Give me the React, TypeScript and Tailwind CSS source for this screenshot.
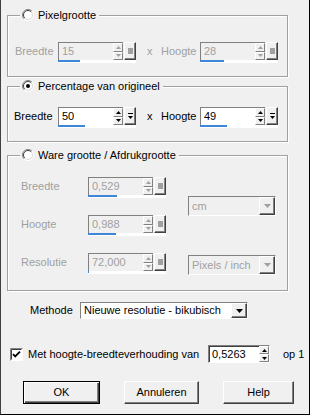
import React from 'react';

const raised =
  'border border-t-white border-l-white border-r-[#404040] border-b-[#404040] shadow-[inset_-1px_-1px_0_#808080] bg-[#f0f0f0]';

function Tri({ up, color }: { up?: boolean; color: string }) {
  return (
    <svg width="5" height="3" viewBox="0 0 5 3">
      <path d={up ? 'M2.5 0L5 3H0Z' : 'M0 0H5L2.5 3Z'} fill={color} />
    </svg>
  );
}

function Spin({ color }: { color: string }) {
  return (
    <div className="flex w-[10px] flex-col">
      <div className="flex flex-1 items-center justify-center border border-t-white border-l-white border-r-[#808080] border-b-[#808080] bg-[#f0f0f0]">
        <Tri up color={color} />
      </div>
      <div className="flex flex-1 items-center justify-center border border-t-white border-l-white border-r-[#808080] border-b-[#808080] bg-[#f0f0f0]">
        <Tri color={color} />
      </div>
    </div>
  );
}

function Radio({ checked }: { checked?: boolean }) {
  return (
    <svg width="12" height="12" viewBox="0 0 12 12">
      <circle cx="6" cy="6" r="5.5" fill="#fff" />
      <path d="M2.1 9.9A5.5 5.5 0 0 1 9.9 2.1" stroke="#808080" fill="none" />
      <path d="M2.8 9.2A4.5 4.5 0 0 1 9.2 2.8" stroke="#404040" fill="none" />
      <path d="M9.9 2.1A5.5 5.5 0 0 1 2.1 9.9" stroke="#fff" fill="none" />
      <path d="M9.2 2.8A4.5 4.5 0 0 1 2.8 9.2" stroke="#d8d8d8" fill="none" />
      {checked && <circle cx="6" cy="6" r="2" fill="#000" />}
    </svg>
  );
}

function Check() {
  return (
    <svg width="13" height="13" viewBox="0 0 13 13">
      <rect x="0" y="0" width="13" height="13" fill="#fff" />
      <path d="M0.5 12.5V0.5H12.5" stroke="#808080" fill="none" />
      <path d="M1.5 11.5V1.5H11.5" stroke="#404040" fill="none" />
      <path d="M1 12.5H12.5V1" stroke="#fff" fill="none" />
      <path d="M3 6.2L5.2 8.4L10 3.6" stroke="#000" strokeWidth="1.8" fill="none" />
    </svg>
  );
}

function SpinEdit({
  value,
  disabled,
  fill,
  side,
}: {
  value: string;
  disabled?: boolean;
  fill: number;
  side: 'square' | 'drop';
}) {
  const color = disabled ? '#a0a0a0' : '#000';
  return (
    <div className="flex w-[78px] flex-col">
      <div className="flex h-[18px]">
        <div
          className={`flex w-[65px] border-t border-l border-[#808080] ${
            disabled ? 'bg-[#f0f0f0]' : 'bg-white'
          }`}
        >
          <span
            className={`flex-1 pl-[3px] leading-[16px] ${
              disabled ? 'text-[#a0a0a0]' : 'text-black'
            }`}
          >
            {value}
          </span>
          <Spin color={color} />
        </div>
        <div className={`ml-[1px] flex w-[12px] items-center justify-center ${raised}`}>
          {side === 'square' ? (
            <span className="h-[6px] w-[5px] bg-[#a0a0a0]" />
          ) : (
            <svg width="5" height="7" viewBox="0 0 5 7">
              <rect x="0" y="0" width="5" height="1" fill="#000" />
              <path d="M0 3H5L2.5 6Z" fill="#000" />
            </svg>
          )}
        </div>
      </div>
      <div className="h-[3px] bg-white">
        <div className="h-[2px] bg-[#3d86d8]" style={{ width: fill }} />
      </div>
    </div>
  );
}

function Combo({
  value,
  disabled,
  className,
}: {
  value: string;
  disabled?: boolean;
  className: string;
}) {
  return (
    <div
      className={`flex border border-t-[#808080] border-l-[#808080] border-r-white border-b-white ${
        disabled ? 'bg-[#f0f0f0] text-[#a0a0a0]' : 'bg-white text-black'
      } ${className}`}
    >
      <span className="flex flex-1 items-center pl-[3px]">{value}</span>
      <div className={`flex w-[16px] items-center justify-center ${raised}`}>
        <svg width="7" height="4" viewBox="0 0 7 4">
          <path d="M0 0H7L3.5 4Z" fill={disabled ? '#a0a0a0' : '#000'} />
        </svg>
      </div>
    </div>
  );
}

function Group({
  title,
  checked,
  className,
  children,
}: {
  title: string;
  checked?: boolean;
  className: string;
  children: React.ReactNode;
}) {
  return (
    <fieldset
      className={`ml-[6px] w-[281px] border border-[#a0a0a0] shadow-[inset_1px_1px_0_#fff,1px_1px_0_#fff] ${className}`}
    >
      <legend className="ml-[12px] flex h-[14px] items-center gap-[4px] bg-[#f0f0f0] px-[2px]">
        <Radio checked={checked} />
        <span className="pr-[1px]">{title}</span>
      </legend>
      {children}
    </fieldset>
  );
}

export default function App() {
  return (
    <div className="flex h-[415px] w-[310px] flex-col border-r border-b border-l border-r-black border-b-black border-l-[#404040] bg-[#f0f0f0] font-['Liberation_Sans',Arial,sans-serif] text-[11px] leading-[13px] text-black">
      {/* Pixelgrootte */}
      <Group title="Pixelgrootte" className="mt-[8px] pb-[13px]">
        <div className="mt-[20px] flex items-start pl-[7px] text-[#a0a0a0]">
          <span className="flex h-[18px] w-[43px] items-center">Breedte</span>
          <SpinEdit value="15" disabled fill={22} side="square" />
          <span className="flex h-[18px] w-[25px] items-center pl-[11px]">x</span>
          <span className="flex h-[18px] w-[39px] items-center">Hoogte</span>
          <SpinEdit value="28" disabled fill={24} side="square" />
        </div>
      </Group>

      {/* Percentage van origineel */}
      <Group title="Percentage van origineel" checked className="mt-[2px] pb-[13px]">
        <div className="mt-[14px] flex items-start pl-[6px]">
          <span className="flex h-[18px] w-[44px] items-center">Breedte</span>
          <SpinEdit value="50" fill={27} side="drop" />
          <span className="flex h-[18px] w-[25px] items-center pl-[11px]">x</span>
          <span className="flex h-[18px] w-[39px] items-center">Hoogte</span>
          <SpinEdit value="49" fill={27} side="drop" />
        </div>
      </Group>

      {/* Ware grootte / Afdrukgrootte */}
      <Group title="Ware grootte / Afdrukgrootte" className="mt-[6px] pb-[15px]">
        <div className="mt-[15px] flex text-[#a0a0a0]">
          <div className="flex w-[80px] flex-col gap-[17px] pl-[13px]">
            <span className="flex h-[21px] items-start pt-[3px]">Breedte</span>
            <span className="flex h-[21px] items-start pt-[3px]">Hoogte</span>
            <span className="flex h-[21px] items-start pt-[3px]">Resolutie</span>
          </div>
          <div className="flex flex-col gap-[17px]">
            <SpinEdit value="0,529" disabled fill={29} side="square" />
            <SpinEdit value="0,988" disabled fill={28} side="square" />
            <SpinEdit value="72,000" disabled fill={1} side="square" />
          </div>
          <div className="ml-[22px] flex flex-col">
            <Combo value="cm" disabled className="mt-[19px] h-[20px] w-[88px]" />
            <Combo value="Pixels / inch" disabled className="mt-[39px] h-[20px] w-[88px]" />
          </div>
        </div>
      </Group>

      {/* Methode */}
      <div className="mt-[11px] flex items-center pl-[29px]">
        <span className="w-[50px]">Methode</span>
        <Combo value="Nieuwe resolutie - bikubisch" className="h-[17px] w-[168px]" />
      </div>

      {/* Verhouding */}
      <div className="mt-[26px] flex items-center pl-[9px]">
        <Check />
        <span className="ml-[5px] w-[180px]">Met hoogte-breedteverhouding van</span>
        <div className="flex h-[18px] w-[62px] border border-t-[#808080] border-l-[#808080] border-r-white border-b-white bg-white shadow-[inset_1px_1px_0_#404040]">
          <span className="flex-1 pl-[3px] leading-[16px]">0,5263</span>
          <Spin color="#000" />
        </div>
        <span className="ml-[13px]">op 1</span>
      </div>

      {/* Knoppen */}
      <div className="mt-[18px] flex pl-[22px]">
        <button className="h-[23px] w-[77px] border border-black bg-[#f0f0f0] shadow-[inset_1px_1px_0_#fff,inset_-1px_-1px_0_#404040,inset_-2px_-2px_0_#808080]">
          OK
        </button>
        <button className={`ml-[24px] h-[23px] w-[75px] ${raised}`}>Annuleren</button>
        <button className={`ml-[24px] h-[23px] w-[71px] ${raised}`}>Help</button>
      </div>
    </div>
  );
}
